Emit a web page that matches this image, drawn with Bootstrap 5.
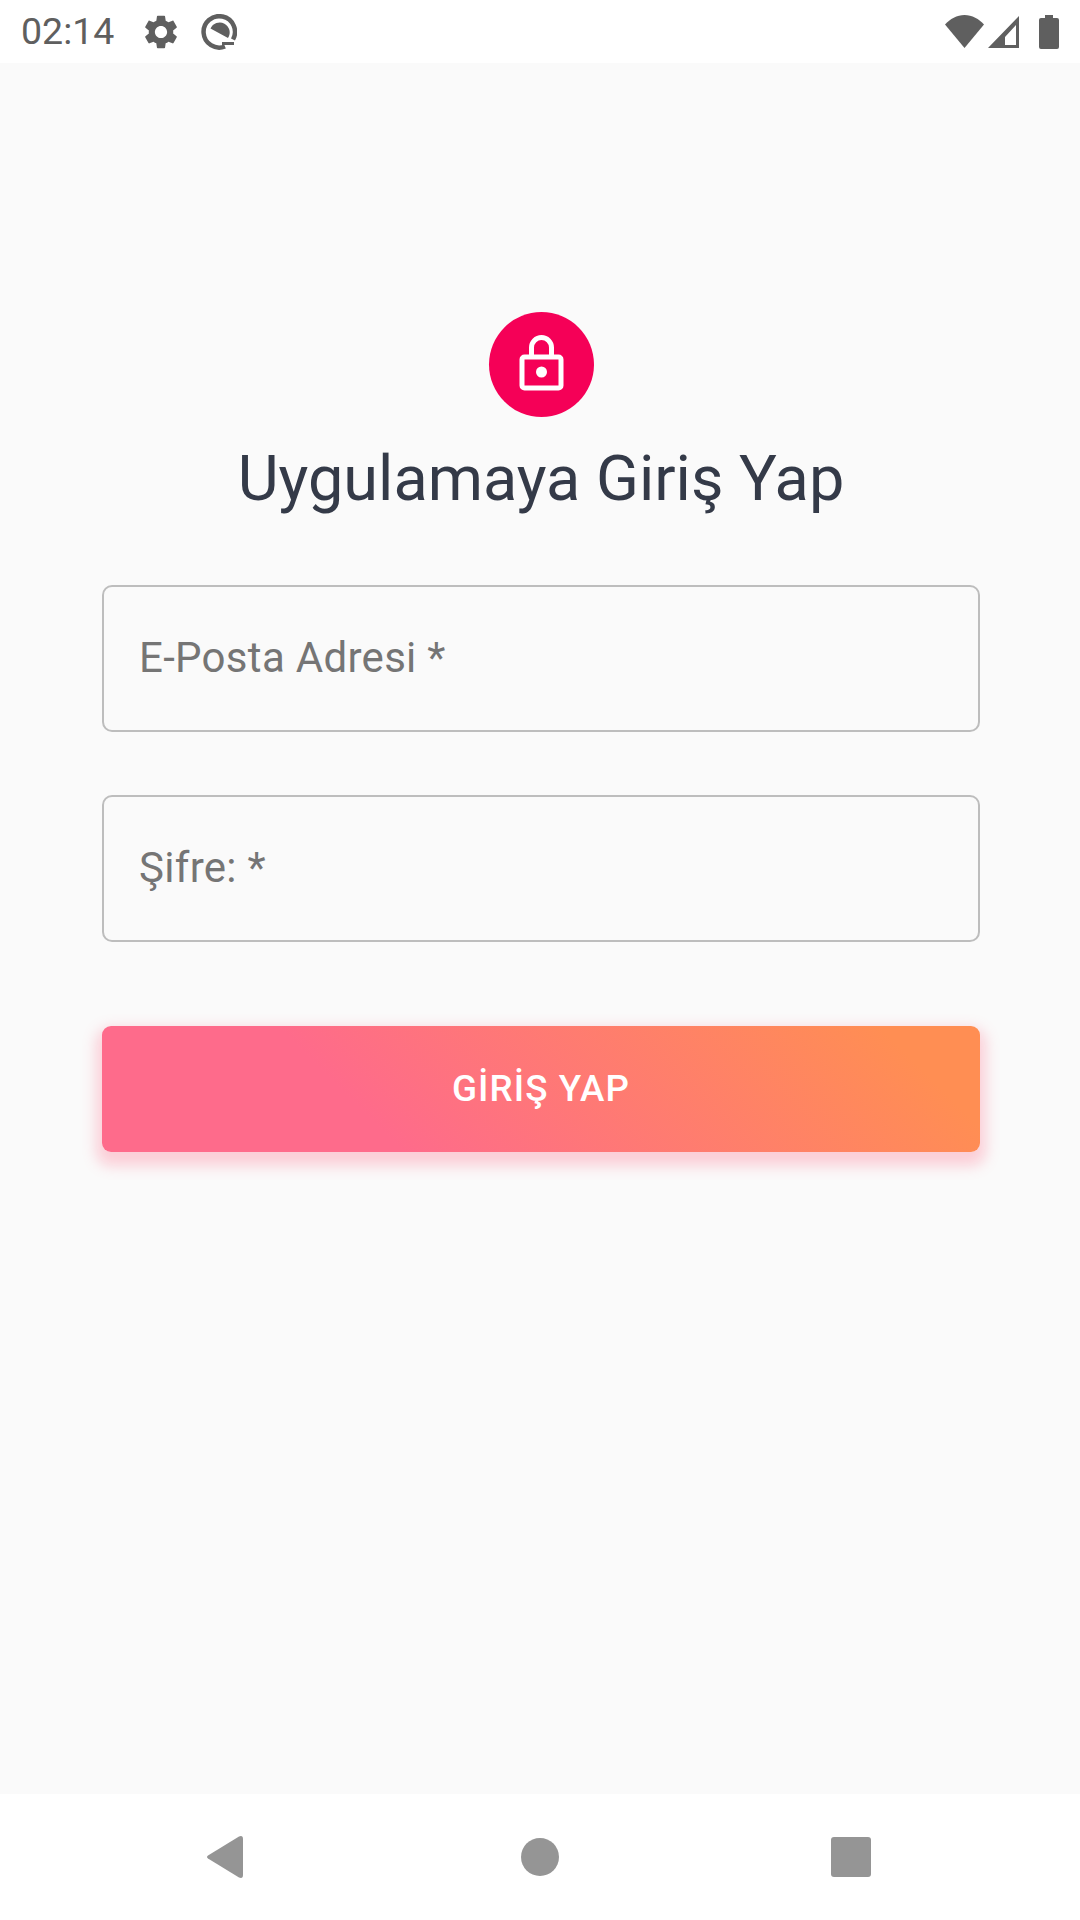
<!DOCTYPE html>
<html lang="tr">
<head>
    <meta charset="utf-8">
    <title>Giriş Yap</title>
    <link href="https://cdn.jsdelivr.net/npm/bootstrap@5.3.0/dist/css/bootstrap.min.css" rel="stylesheet">
    <style>
        body { font-family: Roboto, sans-serif; background: #fafafa; }
        .phone { height: 1920px; }
        .status-bar { height: 63px; padding: 0 21px; color: #5f5f5f; }
        .status-time { font-size: 37.5px; width: 123px; line-height: 1; }
        .icon-gear { width: 34px; height: 34px; margin-right: 23px; }
        .icon-q { width: 36px; height: 36px; }
        .icon-wifi { width: 39px; height: 33px; margin-right: 4px; }
        .icon-signal { width: 31px; height: 32px; margin-right: 20px; }
        .icon-battery { width: 20px; height: 34px; }
        .login-area { padding: 249px 100px 0 102px; }
        .lock-circle { width: 105px; height: 105px; background: #f50057; }
        .login-title { font-size: 63px; font-weight: 400; line-height: 1; color: #343a48; margin: 30px 0 75px; }
        .login-input.form-control { height: 147px; border: 2px solid #bdbdbd; border-radius: 10px; background: transparent; padding: 0 35px 2px; font-size: 42px; letter-spacing: .3px; margin-bottom: 63px; }
        .login-input.form-control::placeholder { color: #757575; opacity: 1; }
        .login-btn.btn { display: block; width: 100%; height: 126px; margin-top: 84px; border: 0; border-radius: 9px; color: #fff; font-size: 36.75px; font-weight: 500; letter-spacing: 1.05px; background: linear-gradient(45deg, #fe6b8b 30%, #ff8e53 90%); box-shadow: 0 8px 14px 6px rgba(255, 105, 135, .3); }
        .nav-bar { height: 126px; padding-left: 207px; color: #959595; }
        .nav-back { width: 36px; height: 42px; margin-right: 278px; }
        .nav-home { width: 38px; height: 38px; margin-right: 272px; }
        .nav-recent { width: 40px; height: 40px; }
    </style>
</head>
<body>
<div class="phone d-flex flex-column">
    <!-- status bar -->
    <div class="status-bar bg-white d-flex align-items-center">
        <span class="status-time">02:14</span>
        <svg class="icon-gear" viewBox="2 2 20 20" fill="currentColor"><path d="M19.14 12.94c.04-.3.06-.61.06-.94 0-.32-.02-.64-.07-.94l2.03-1.58c.18-.14.23-.41.12-.61l-1.92-3.32c-.12-.22-.37-.29-.59-.22l-2.39.96c-.5-.38-1.03-.7-1.62-.94l-.36-2.54c-.04-.24-.24-.41-.48-.41h-3.84c-.24 0-.43.17-.47.41l-.36 2.54c-.59.24-1.13.57-1.62.94l-2.39-.96c-.22-.08-.47 0-.59.22L2.74 8.87c-.12.21-.08.47.12.61l2.03 1.58c-.05.3-.09.63-.09.94s.02.64.07.94l-2.03 1.58c-.18.14-.23.41-.12.61l1.92 3.32c.12.22.37.29.59.22l2.39-.96c.5.38 1.03.7 1.62.94l.36 2.54c.05.24.24.41.48.41h3.84c.24 0 .44-.17.47-.41l.36-2.54c.59-.24 1.13-.56 1.62-.94l2.39.96c.22.08.47 0 .59-.22l1.92-3.32c.12-.22.07-.47-.12-.61l-2.01-1.58zM12 15.6c-1.98 0-3.6-1.62-3.6-3.6s1.62-3.6 3.6-3.6 3.6 1.62 3.6 3.6-1.62 3.6-3.6 3.6z"/></svg>
        <svg class="icon-q" viewBox="0 0 36 36" fill="none" stroke="currentColor" stroke-width="4.500"><path d="M24 32.500A15.700 15.700 0 1 1 32 25.500"/><path d="M9.500 14.500A10 10 0 1 1 27 24z" fill="currentColor" stroke="none"/><path d="M21 29.500H33" stroke-width="3"/></svg>
        <span class="ms-auto"></span>
        <svg class="icon-wifi" viewBox="0 0 39 33" fill="currentColor"><path d="M19.500 33L0 9.500C5 4 12 0 19.500 0S34 4 39 9.500z"/></svg>
        <svg class="icon-signal" viewBox="0 0 31 32" fill="currentColor"><path fill-rule="evenodd" d="M31 0V32H0zM28 9L17 21V29H28z"/></svg>
        <svg class="icon-battery" viewBox="0 0 20 34" fill="currentColor"><path d="M6 0H14V3H18Q20 3 20 5V32Q20 34 18 34H2Q0 34 0 32V5Q0 3 2 3H6z"/></svg>
    </div>

    <!-- login form -->
    <div class="login-area flex-grow-1">
        <div class="d-flex flex-column align-items-center">
            <div class="lock-circle rounded-circle d-flex align-items-center justify-content-center">
                <svg class="mb-1" width="45" height="56" viewBox="0 0 45 56" fill="none" stroke="#fff" stroke-width="5"><rect x="3" y="22" width="39" height="31" rx="2.500"/><path d="M12.500 22V12.500a10 10 0 0 1 20 0V22"/><circle cx="22.500" cy="37" r="5.500" fill="#fff" stroke="none"/></svg>
            </div>
            <h1 class="login-title">Uygulamaya Giriş Yap</h1>
        </div>
        <form>
            <input type="email" class="form-control login-input" placeholder="E-Posta Adresi *">
            <input type="password" class="form-control login-input" placeholder="Şifre: *">
            <button type="button" class="btn login-btn">GİRİŞ YAP</button>
        </form>
    </div>

    <!-- navigation bar -->
    <div class="nav-bar bg-white d-flex align-items-center">
        <svg class="nav-back" viewBox="0 0 36 42" fill="currentColor"><path d="M1 19.500L32 .5Q36 -1 36 3V39Q36 43 32 41.500L1 22.500Q-1 21 1 19.500z"/></svg>
        <svg class="nav-home" viewBox="0 0 40 40" fill="currentColor"><circle cx="20" cy="20" r="20"/></svg>
        <svg class="nav-recent" viewBox="0 0 40 40" fill="currentColor"><rect width="40" height="40" rx="3"/></svg>
    </div>
</div>
</body>
</html>
